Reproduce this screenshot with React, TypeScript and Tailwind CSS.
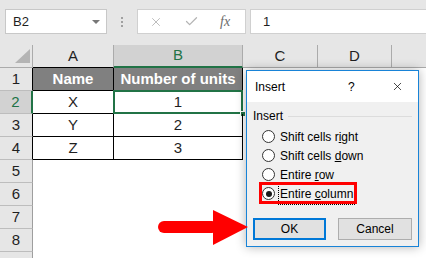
import { X, Check } from "lucide-react";

type Row = { n: number; a?: string; b?: string; head?: boolean; sel?: boolean; cut?: boolean };

const rows: Row[] = [
  { n: 1, a: "Name", b: "Number of units", head: true },
  { n: 2, a: "X", b: "1", sel: true },
  { n: 3, a: "Y", b: "2" },
  { n: 4, a: "Z", b: "3" },
  { n: 5 },
  { n: 6 },
  { n: 7 },
  { n: 8 },
  { n: 9, cut: true },
];

const Radio = ({ checked }: { checked?: boolean }) => (
  <span className="w-[13px] h-[13px] rounded-full border border-[#333] bg-white flex items-center justify-center shrink-0">
    {checked && <span className="w-[6px] h-[6px] rounded-full bg-[#1a1a1a]" />}
  </span>
);

const App = () => {
  return (
    <div className="relative w-[426px] h-[258px] overflow-hidden bg-white font-['Liberation_Sans',Arial,sans-serif] text-[#1f1f1f]">
      {/* Formula bar */}
      <div className="h-[45px] bg-[#e6e6e6] flex items-start pt-[9px]">
        <div className="ml-[5px] w-[102px] h-[25px] bg-white border border-[#c8c8c8] flex items-center justify-between pl-[7px] pr-[6px]">
          <span className="text-[13px]">B2</span>
          <span className="w-0 h-0 border-l-[4px] border-r-[4px] border-t-[4px] border-l-transparent border-r-transparent border-t-[#777]" />
        </div>
        <div className="w-[30px] h-[25px] flex flex-col items-center justify-center gap-[2px]">
          <span className="w-[2px] h-[2px] bg-[#a0a0a0]" />
          <span className="w-[2px] h-[2px] bg-[#a0a0a0]" />
          <span className="w-[2px] h-[2px] bg-[#a0a0a0]" />
        </div>
        <div className="w-[109px] h-[25px] bg-white border border-[#d0d0d0] flex items-center">
          <X className="ml-[11px] w-[14px] h-[14px] text-[#b4b4b4]" strokeWidth={1.5} />
          <Check className="ml-[21px] w-[15px] h-[15px] text-[#b4b4b4]" strokeWidth={2} />
          <span className="ml-[21px] font-['Liberation_Serif',serif] italic text-[14px] text-[#6b6b6b]">fx</span>
        </div>
        <div className="ml-[4px] flex-1 h-[25px] bg-white border border-r-0 border-[#d0d0d0] flex items-center pl-[12px]">
          <span className="text-[13px]">1</span>
        </div>
      </div>

      {/* Column headers */}
      <div className="flex h-[23px] bg-[#e6e6e6] text-[15px]">
        <div className="w-[33px] shrink-0 border-r border-b border-[#ababab] relative">
          <svg className="absolute left-0 top-0" width="33" height="22">
            <polygon points="15,18 30,18 30,4" fill="#b4b4b4" />
          </svg>
        </div>
        <div className="w-[81px] shrink-0 border-r border-[#ababab] border-b border-b-black flex items-center justify-center">A</div>
        <div className="w-[129px] shrink-0 bg-[#d2d2d2] border-r border-[#ababab] border-b-2 border-b-[#217346] flex items-center justify-center text-[#217346]">B</div>
        <div className="w-[75px] shrink-0 border-r border-b border-[#ababab] flex items-center justify-center">C</div>
        <div className="w-[74px] shrink-0 border-r border-b border-[#ababab] flex items-center justify-center">D</div>
        <div className="flex-1 border-b border-[#ababab]" />
      </div>

      {/* Rows */}
      {rows.map((r) => {
        const inTable = r.a !== undefined;
        return (
          <div key={r.n} className="flex h-[23px] text-[15px]">
            <div
              className={
                r.sel
                  ? "w-[33px] shrink-0 bg-[#d2d2d2] text-[#217346] border-b border-b-[#bdbdbd] border-r-2 border-r-[#217346] flex items-center justify-center"
                  : inTable
                  ? "w-[33px] shrink-0 bg-[#e6e6e6] border-b border-b-[#bdbdbd] border-r border-r-black flex items-center justify-center"
                  : "w-[33px] shrink-0 bg-[#e6e6e6] border-b border-b-[#bdbdbd] border-r border-r-[#9e9e9e] flex items-center justify-center"
              }
            >
              {r.cut ? null : r.n}
            </div>
            {inTable ? (
              <>
                <div
                  className={
                    r.head
                      ? "w-[81px] shrink-0 bg-[#808080] text-white font-bold border-r border-b border-black flex items-center justify-center"
                      : "w-[81px] shrink-0 border-r border-b border-black flex items-center justify-center"
                  }
                >
                  {r.a}
                </div>
                <div
                  className={
                    r.head
                      ? "w-[129px] shrink-0 bg-[#808080] text-white font-bold border-r border-b border-black flex items-center justify-center"
                      : "w-[129px] shrink-0 border-r border-b border-black flex items-center justify-center relative"
                  }
                >
                  {r.b}
                  {r.sel && (
                    <>
                      <span className="absolute -left-px -top-px -right-px -bottom-px border-2 border-[#217346]" />
                      <span className="absolute -right-[4px] -bottom-[4px] w-[6px] h-[6px] bg-[#217346] border border-white" />
                    </>
                  )}
                </div>
              </>
            ) : (
              <div className="w-[210px] shrink-0" />
            )}
            <div className="flex-1" />
          </div>
        );
      })}

      {/* Insert dialog */}
      <div className="absolute left-[246px] top-[70px] w-[173px] h-[177px] border border-[#1883d7] bg-[#f0f0f0] shadow-[0_0_10px_rgba(0,0,0,0.3)] text-[12px] text-black">
        <div className="h-[31px] bg-white flex items-center pl-[8px]">
          <span>Insert</span>
          <span className="ml-[63px]">?</span>
          <X className="ml-[36px] w-[13px] h-[13px] text-black" strokeWidth={1.3} />
        </div>
        <div className="px-[6px] pt-[7px]">
          <div className="flex items-center h-[14px]">
            <span>Insert</span>
            <span className="flex-1 h-px bg-[#dcdcdc] ml-[5px]" />
          </div>
          <div className="mt-[4px] ml-[9px] flex flex-col">
            <div className="h-[19px] flex items-center gap-[5px]">
              <Radio />
              <span>
                Shift cells r<span className="underline">i</span>ght
              </span>
            </div>
            <div className="h-[19px] flex items-center gap-[5px]">
              <Radio />
              <span>
                Shift cells <span className="underline">d</span>own
              </span>
            </div>
            <div className="h-[19px] flex items-center gap-[5px]">
              <Radio />
              <span>
                Entire <span className="underline">r</span>ow
              </span>
            </div>
            <div className="h-[19px] flex items-center gap-[5px]">
              <Radio checked />
              <span className="outline-1 outline-dotted outline-black outline-offset-[1px]">
                Entire <span className="underline">c</span>olumn
              </span>
            </div>
          </div>
          <div className="mt-[15px] flex justify-between">
            <button className="w-[73px] h-[22px] bg-[#e1e1e1] border-2 border-[#0078d7] flex items-center justify-center">OK</button>
            <button className="w-[74px] h-[22px] bg-[#e1e1e1] border border-[#adadad] flex items-center justify-center">Cancel</button>
          </div>
        </div>
        {/* red highlight */}
        <span className="absolute left-[12px] top-[111px] w-[98px] h-[22px] border-[3px] border-[#ff0000]" />
      </div>

      {/* Red arrow */}
      <svg className="absolute left-[150px] top-[205px]" width="100" height="45">
        <rect x="8" y="16" width="60" height="12" rx="6" fill="#ff0000" />
        <polygon points="63,5 63,40 98,22" fill="#ff0000" />
      </svg>
    </div>
  );
};

export default App;
